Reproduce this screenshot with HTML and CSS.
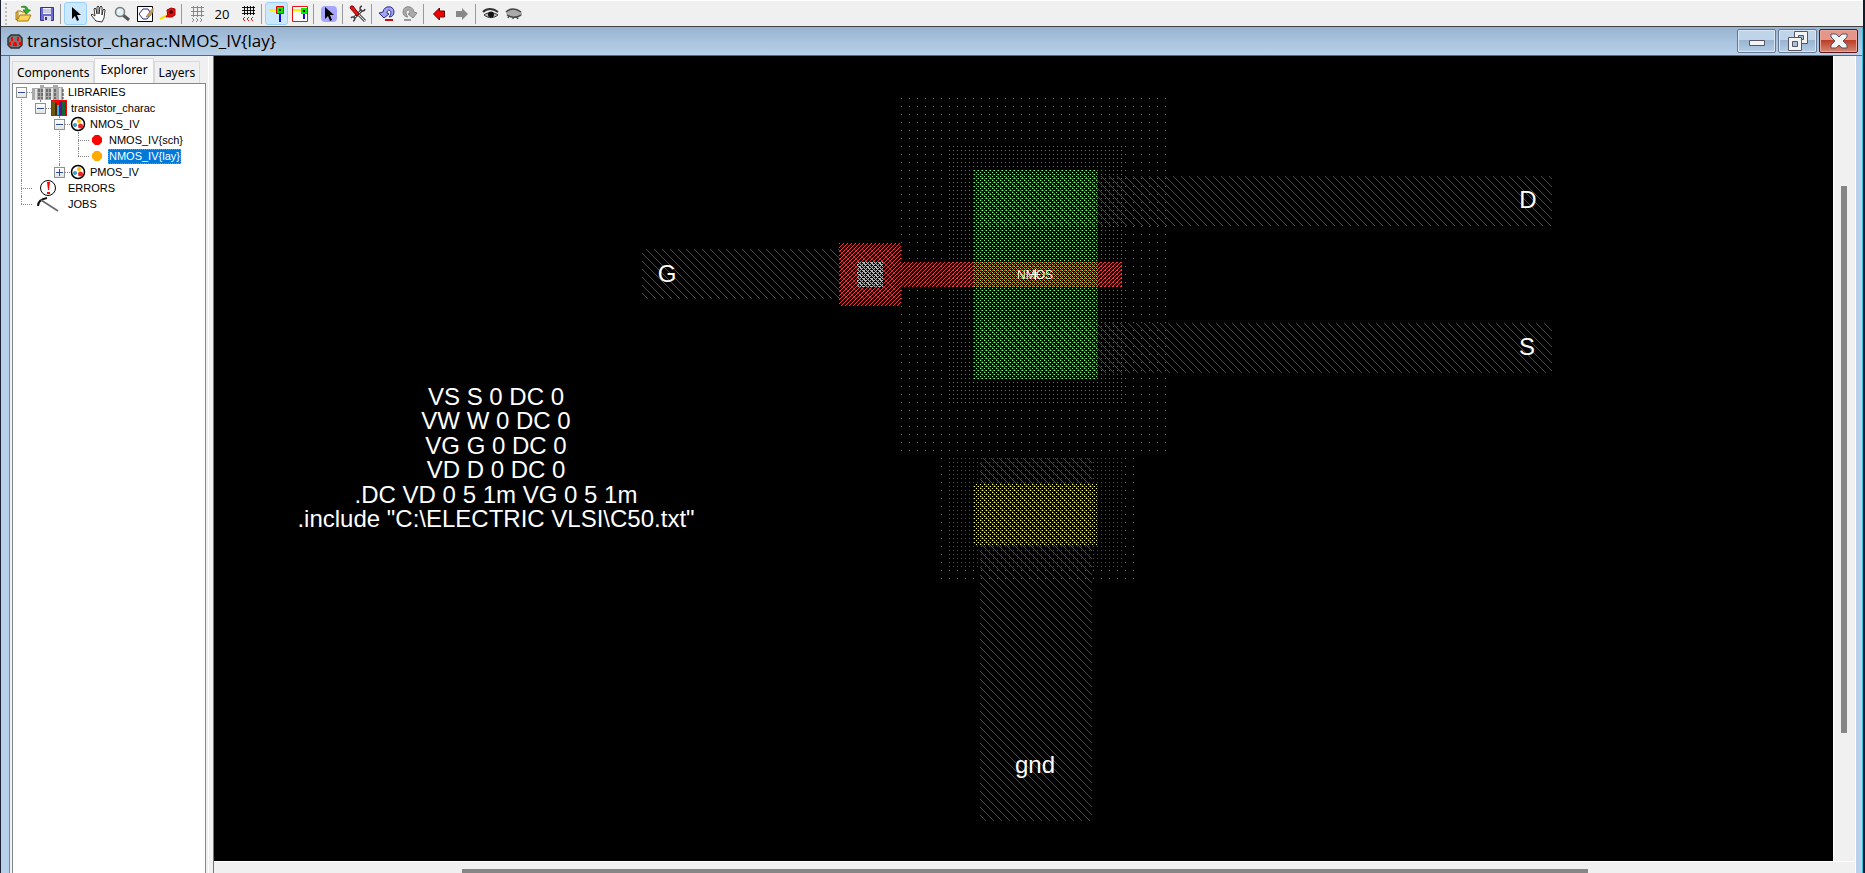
FILE: index.html
```html
<!DOCTYPE html>
<html lang="en">
<head>
<meta charset="utf-8">
<title>transistor_charac:NMOS_IV{lay}</title>
<link rel="stylesheet" href="styles.css">
</head>
<body>
<div class="app">
  <header class="toolbar">
    <span class="grip"></span>
    <button class="tool" aria-label="Open library"><svg width="18" height="18" viewBox="0 0 18 18"><path d="M2 6h4l1 1h4v3" fill="#ffe680" stroke="#a87a10"/><path d="M1 15V7h2v6z" fill="#f5c842" stroke="#a87a10"/><path d="M2 16l3-6h11l-3 6z" fill="#fbd65a" stroke="#a87a10"/><path d="M6 2c4-2 7 0 7 3h2.500l-4 4-3.500-4H11c0-2-2-3-5-3z" fill="#35b135" stroke="#126b18" stroke-width=".7"/></svg></button>
    <button class="tool" aria-label="Save library"><svg width="18" height="18" viewBox="0 0 18 18"><path d="M2.500 2.500h13v13h-13z" fill="#6a6ad0" stroke="#33338f"/><path d="M5 3h8v6H5z" fill="#eef"/><path d="M5 5h8M5 7h8" stroke="#aab"/><path d="M6 11h7v5H6z" fill="#dde"/><path d="M7 12h2v3H7z" fill="#33338f"/></svg></button>
    <span class="sep"></span>
    <button class="tool on" aria-label="Click, zoom, wire"><svg width="18" height="18" viewBox="0 0 18 18"><path d="M5 2v12l3-3 2 5 2-1-2-5h4z"/></svg></button>
    <button class="tool" aria-label="Pan"><svg width="18" height="18" viewBox="0 0 18 18"><path d="M6 16l-5-6 1-1 3 2-1-7 1-1 1 1 1 5V2l1-1 1 1v7l1-7 1-1 1 1v8l1-5 1-1 1 1-1 8-2 4z" fill="#fff" stroke="#222" stroke-width=".9"/></svg></button>
    <button class="tool" aria-label="Zoom"><svg width="18" height="18" viewBox="0 0 18 18"><path d="M10 10l6 5" stroke="#555" stroke-width="3"/><circle cx="7" cy="7" r="4.500" fill="#dff0f5" stroke="#777" stroke-width="1.500"/><path d="M5 7l2-2" stroke="#fff"/></svg></button>
    <button class="tool" aria-label="Outline"><svg width="18" height="18" viewBox="0 0 18 18"><path d="M1.500 1.500h15v15h-15z" fill="#fff" stroke="#000"/><path d="M3 9l4-5h5l3 5-4 5H7z" fill="none" stroke="#23238e"/><path d="M17 3l-5 6-2 3 4-1 3-4z" fill="#c99b50" stroke="#876" stroke-width=".7"/></svg></button>
    <button class="tool" aria-label="Measure"><svg width="18" height="18" viewBox="0 0 18 18"><path d="M1 14l8-4" stroke="#f5e000" stroke-width="2"/><path d="M8 5l4-2 4 1v6l-3 2H9z" fill="#e01010" stroke="#a00"/><circle cx="12" cy="7" r="2" fill="#500"/><path d="M7 12l3-2" stroke="#d00" stroke-width="2"/></svg></button>
    <span class="sep"></span>
    <button class="tool" aria-label="Toggle grid"><svg width="18" height="18" viewBox="0 0 18 18"><path d="M5.500 1v11M9.500 1v11M13.500 1v11M3 2.500h13M3 6.500h13M3 10.500h13" stroke="#888"/><path d="M4 13l2 2-2 2M8 13l2 2-2 2M12 13l2 2-2 2" fill="none" stroke="#888"/></svg></button>
    <button class="tool num" aria-label="Grid spacing">20</button>
    <button class="tool" aria-label="Grid finer"><svg width="18" height="18" viewBox="0 0 18 18"><path d="M3 2.500h13M3 5.500h13M3 8.500h13M5.500 1v9M8.500 1v9M11.500 1v9M14.500 1v9" stroke="#111"/><path d="M6 12l-2 2 2 2M10 12l-2 2 2 2M14 12l-2 2 2 2" fill="none" stroke="#e01010"/></svg></button>
    <span class="sep"></span>
    <button class="tool on" aria-label="Select objects"><svg width="18" height="18" viewBox="0 0 18 18"><path d="M1 5h7" stroke="#f4f400" stroke-width="2"/><path d="M12 9v8" stroke="#1010e0" stroke-width="2"/><path d="M8.500 1.500h7v7h-7z" fill="#00f000" stroke="#e00000"/><path d="M11 4h2v2h-2z"/></svg></button>
    <button class="tool" aria-label="Select area"><svg width="18" height="18" viewBox="0 0 18 18"><path d="M1.500 1.500h15v15h-15z" fill="#fff" stroke="#f01010"/><path d="M2 5h8" stroke="#f4f400" stroke-width="2"/><path d="M13 8v6" stroke="#1010e0" stroke-width="2"/><path d="M10 3h6v6h-6z" fill="#00f000"/><path d="M12 5h2v2h-2z"/></svg></button>
    <span class="sep"></span>
    <button class="tool" aria-label="Toggle special select"><svg width="18" height="18" viewBox="0 0 18 18"><rect x="1" y="1" width="16" height="16" rx="4" fill="#a6a6ff"/><path d="M5 2v12l3-3 2 5 2-1-2-5h4z"/></svg></button>
    <span class="sep"></span>
    <button class="tool" aria-label="Preferences"><svg width="18" height="18" viewBox="0 0 18 18"><path d="M5 13l8-8" stroke="#444" stroke-width="3"/><path d="M5 13l8-8" stroke="#eee"/><path d="M2 13a2 2 0 1 1 2 3M13 1a2.500 2.500 0 1 0 3 3" stroke="#444" stroke-width="1.500" fill="none"/><path d="M10 10l6 6" stroke="#555" stroke-width="3"/><path d="M10 10l6 6" stroke="#ddd"/><path d="M2 1h2l6 8-2 2L1 3z" fill="#e01818" stroke="#800"/></svg></button>
    <span class="sep"></span>
    <button class="tool" aria-label="Undo"><svg width="18" height="18" viewBox="0 0 18 18"><path d="M5 7c1-7 11-7 11 0 0 3-2 5-5 5 2-2 3-6 0-7-1 0-2 1-2 3l2 1-5 4-5-5z" fill="#a4a4f4" stroke="#2b2b90"/><path d="M7 14h8v2H7z" fill="#c01010"/></svg></button>
    <button class="tool" aria-label="Redo"><svg width="18" height="18" viewBox="0 0 18 18"><path d="M13 7C12 0 2 0 2 7c0 3 2 5 5 5-2-2-3-6 0-7 1 0 2 1 2 3l-2 1 5 4 4-5z" fill="#aaa" stroke="#888"/><path d="M3 14h7v2H3z" fill="#999"/></svg></button>
    <span class="sep"></span>
    <button class="tool" aria-label="Back"><svg width="18" height="18" viewBox="0 0 18 18"><path d="M3.500 9l6-6v3h5v6h-5v3z" fill="#f00000" stroke="#600"/></svg></button>
    <button class="tool" aria-label="Forward"><svg width="18" height="18" viewBox="0 0 18 18"><path d="M15 9L9 3v3H3v6h6v3z" fill="#888"/></svg></button>
    <span class="sep"></span>
    <button class="tool" aria-label="Expand cells"><svg width="18" height="18" viewBox="0 0 18 18"><path d="M1 7c4-4 10-4 15 0" fill="none" stroke="#333" stroke-width="2"/><path d="M2 10c3-3 10-3 14 0-4 3-9 4-14 0z" fill="#bbb" stroke="#333"/><circle cx="9" cy="9.500" r="3" fill="#111"/></svg></button>
    <button class="tool" aria-label="Unexpand cells"><svg width="18" height="18" viewBox="0 0 18 18"><path d="M1 8c4-5 11-5 16 0v2c-3 4-12 4-15 0z" fill="#aaa"/><path d="M1 7c4-4 10-4 15 0M2 10c4 3 10 3 14 0M4 11l-1 2M8 12v2M12 12l1 2" fill="none" stroke="#444" stroke-width="1.500"/></svg></button>
  </header>

  <section class="window">
    <div class="titlebar">
      <svg class="logo" width="16" height="15" viewBox="0 0 16 15"><path d="M4 1h8l3 3v7l-3 3H4l-3-3V4z" fill="#777" stroke="#333" stroke-width="1.500"/><path d="M4 3h2v4H4zM10 3h2v4h-2zM6 10l1-2h2l1 2v2H6zM2 8h2v3H2zM12 8h2v3h-2z" fill="#f00"/></svg>
      <h1 class="title">transistor_charac:NMOS_IV{lay}</h1>
      <div class="controls">
        <button class="ctl" aria-label="Minimize"><svg width="20" height="20" viewBox="0 0 20 20"><path d="M2.500 9.500h15v5h-15z" fill="#f4f4f4" stroke="#555568"/></svg></button>
        <button class="ctl" aria-label="Restore"><svg width="22" height="20" viewBox="0 0 22 20"><path d="M7.500.5h13v12h-13z" fill="#f4f4f4" stroke="#555568"/><path d="M11.500 4.500h5v4h-5z" fill="#a9c0da" stroke="#555568"/><path d="M1.500 6.500h13v13h-13z" fill="#f4f4f4" stroke="#555568"/><path d="M5.500 10.500h5v5h-5z" fill="#a9c0da" stroke="#555568"/></svg></button>
        <button class="ctl close" aria-label="Close"><svg width="20" height="18" viewBox="0 0 20 18"><path d="M2 2h5l3 3 3-3h5v3l-4 4 4 4v3h-5l-3-3-3 3H2v-3l4-4-4-4z" fill="#f4f4f4" stroke="#555568"/></svg></button>
      </div>
    </div>

    <div class="content">
      <aside class="side">
        <div class="tabs" role="tablist">
          <button class="tab" role="tab">Components</button>
          <button class="tab active" role="tab" aria-selected="true">Explorer</button>
          <button class="tab" role="tab">Layers</button>
        </div>
        <div class="tree">
          <ul class="branch root">
            <li class="open"><div class="row"><button class="box" aria-label="Collapse"></button><span class="link"></span><svg width="32" height="16" viewBox="0 0 32 16"><path d="M0 4h8V1h4v2h9V1h5v2h5v13H0z" fill="#aaa"/><path d="M4 5v11M12 4v12M20 4v12M28 4v12" stroke="#e4e4e4" stroke-width="2"/><path d="M7 5v10M10 5v10M15 5v10M18 5v10M23 5v10M31 5v10" stroke="#333" stroke-dasharray="3 1"/></svg><span class="label">LIBRARIES</span></div>
              <ul class="branch">
                <li class="open"><div class="row"><button class="box" aria-label="Collapse"></button><span class="link"></span><svg width="16" height="16" viewBox="0 0 16 16"><path d="M0 0h16v16H0z" fill="#f00"/><path d="M1 1h3v14H1z" fill="#6b5a10"/><path d="M4 3h2v12H4z" fill="#552200"/><path d="M6 5h2v10H6z" fill="#29b6e6"/><path d="M8 1h3v14H8z" fill="#60108a"/><path d="M11 1h3v14h-3z" fill="#163"/><path d="M14 1h1v14h-1z" fill="#22f"/></svg><span class="label">transistor_charac</span></div>
                  <ul class="branch">
                    <li class="open"><div class="row"><button class="box" aria-label="Collapse"></button><span class="link"></span><svg width="16" height="16" viewBox="0 0 16 16"><circle cx="8" cy="8" r="6.500" fill="#fff" stroke="#000" stroke-width="1.500"/><circle cx="9" cy="5" r="2" fill="#fb0"/><circle cx="5" cy="9" r="2" fill="#39c"/><circle cx="10.500" cy="10" r="2.500" fill="#e22"/></svg><span class="label">NMOS_IV</span></div>
                      <ul class="branch">
                        <li><div class="row"><span class="link leaf"></span><svg width="16" height="16" viewBox="0 0 16 16"><path d="M6 3h4l3 3v4l-3 3H6l-3-3V6z" fill="#f00"/></svg><span class="label">NMOS_IV{sch}</span></div></li>
                        <li><div class="row"><span class="link leaf"></span><svg width="16" height="16" viewBox="0 0 16 16"><path d="M6 3h4l3 3v4l-3 3H6l-3-3V6z" fill="#fa0"/></svg><span class="label selected">NMOS_IV{lay}</span></div></li>
                      </ul>
                    </li>
                    <li><div class="row"><button class="box plus" aria-label="Expand"></button><span class="link"></span><svg width="16" height="16" viewBox="0 0 16 16"><circle cx="8" cy="8" r="6.500" fill="#fff" stroke="#000" stroke-width="1.500"/><circle cx="9" cy="5" r="2" fill="#fb0"/><circle cx="5" cy="9" r="2" fill="#39c"/><circle cx="10.500" cy="10" r="2.500" fill="#e22"/></svg><span class="label">PMOS_IV</span></div></li>
                  </ul>
                </li>
              </ul>
            </li>
            <li><div class="row"><span class="link leaf"></span><svg width="32" height="16" viewBox="0 0 32 16"><circle cx="16" cy="8" r="7.500" fill="#fff" stroke="#000"/><path d="M15 2h3l-1 8h-1zM15 12h3v2h-3z" fill="#f00"/></svg><span class="label">ERRORS</span></div></li>
            <li><div class="row"><span class="link leaf"></span><svg width="32" height="16" viewBox="0 0 32 16"><path d="M6 10c0-4 3-7 9-8" fill="none" stroke="#111" stroke-width="2"/><path d="M9 4l17 11" stroke="#666" stroke-width="1.500"/></svg><span class="label">JOBS</span></div></li>
          </ul>
        </div>
      </aside>

      <main class="editor">
        <svg class="layout" role="img" aria-label="NMOS layout">
          <defs>
            <pattern id="metal" width="8" height="8" patternUnits="userSpaceOnUse" shape-rendering="crispEdges"><path d="M5 0h1v1h-1zM6 1h1v1h-1zM7 2h1v1h-1zM0 3h1v1h-1zM1 4h1v1h-1zM2 5h1v1h-1zM3 6h1v1h-1zM4 7h1v1h-1z" fill="#3333ff"/></pattern>
            <pattern id="poly" width="4" height="4" patternUnits="userSpaceOnUse" shape-rendering="crispEdges"><path d="M2 0h1v1h-1zM1 1h1v1h-1zM0 2h1v1h-1zM3 3h1v1h-1z" fill="#ff3333"/></pattern>
            <pattern id="select" width="8" height="8" patternUnits="userSpaceOnUse" shape-rendering="crispEdges"><path d="M5 2h1v1h-1z" fill="#96643c"/></pattern>
            <pattern id="implant" width="4" height="4" patternUnits="userSpaceOnUse" shape-rendering="crispEdges"><path d="M1 2h1v1h-1z" fill="#96643c"/></pattern>
            <pattern id="well" width="4" height="4" patternUnits="userSpaceOnUse" shape-rendering="crispEdges"><path d="M1 2h1v1h-1z" fill="#007840"/></pattern>
            <pattern id="active" width="4" height="4" patternUnits="userSpaceOnUse" shape-rendering="crispEdges"><path d="M2 2h1v1h-1zM0 0h1v1h-1z" fill="#6bff6b"/></pattern>
            <pattern id="tap" width="4" height="4" patternUnits="userSpaceOnUse" shape-rendering="crispEdges"><path d="M2 2h1v1h-1zM0 0h1v1h-1z" fill="#ffff66"/></pattern>
            <pattern id="cut" width="4" height="4" patternUnits="userSpaceOnUse" shape-rendering="crispEdges"><path d="M0 0h3v1h-3zM1 1h1v1h-1zM0 2h1v1h-1zM2 2h2v1h-2zM3 3h1v1h-1zM0 3h1v1h-1z" fill="#b4b4b4"/></pattern>
          </defs>
          <g transform="translate(-214 -56)">
            <rect x="901" y="98" width="265" height="353" fill="url(#select)"/>
            <rect x="941" y="458" width="193" height="121" fill="url(#select)"/>
            <rect x="949" y="146" width="173" height="257" fill="url(#implant)"/>
            <rect x="949" y="458" width="173" height="109" fill="url(#well)"/>
            <rect x="974" y="170" width="124" height="209" fill="url(#active)"/>
            <rect x="974" y="484" width="124" height="61" fill="url(#tap)"/>
            <rect x="839" y="243" width="62" height="63" fill="url(#poly)"/>
            <rect x="901" y="262" width="221" height="25" fill="url(#poly)"/>
            <rect x="857" y="262" width="26" height="25" fill="url(#cut)"/>
            <rect x="642" y="249" width="253" height="50" fill="url(#metal)"/>
            <rect x="980" y="176" width="572" height="50" fill="url(#metal)"/>
            <rect x="980" y="323" width="572" height="50" fill="url(#metal)"/>
            <rect x="980" y="458" width="112" height="363" fill="url(#metal)"/>
            <path d="M1030 274.500h10M1035.500 269v11" stroke="#fff"/>
            <g class="names">
              <text x="667" y="282">G</text>
              <text x="1528" y="208">D</text>
              <text x="1527" y="355">S</text>
              <text x="1035" y="773">gnd</text>
              <text class="small" x="1035" y="279">NMOS</text>
              <text x="496" y="405">VS S 0 DC 0</text>
              <text x="496" y="429">VW W 0 DC 0</text>
              <text x="496" y="454">VG G 0 DC 0</text>
              <text x="496" y="478">VD D 0 DC 0</text>
              <text x="496" y="503">.DC VD 0 5 1m VG 0 5 1m</text>
              <text x="496" y="527">.include "C:\ELECTRIC VLSI\C50.txt"</text>
            </g>
          </g>
        </svg>
        <div class="vbar"><span class="vthumb"></span></div>
        <div class="hbar"><span class="hthumb"></span></div>
      </main>
    </div>
  </section>
</div>
</body>
</html>
```

FILE: styles.css
```css
* { box-sizing: border-box; }
body { margin: 0; background: #f0f0f0; font-family: "Liberation Sans", Arial, sans-serif; color: #000; }
button { padding: 0; border: 0; background: none; font: inherit; color: inherit; }
svg { display: block; }
.app { display: flex; flex-direction: column; height: 100vh; overflow: hidden; border-left: 1px solid #1c2233; border-right: 2px solid #101c2c; }

.toolbar { display: flex; align-items: center; flex: none; height: 27px; padding-left: 4px; background: #f0f0f0; border-top: 1px solid #fff; border-bottom: 1px solid #444; }
.grip { width: 2px; height: 22px; margin-right: 5px; background: repeating-linear-gradient(#bbb 0 2px, transparent 2px 4px); }
.tool { display: flex; align-items: center; justify-content: center; flex: none; width: 23px; height: 23px; border-radius: 3px; }
.tool.on { background: #cce8ff; border: 1px solid #99d1ff; }
.tool.num { width: 28px; font: 13px "Open Sans", sans-serif; }
.sep { flex: none; width: 1px; height: 20px; margin: 0 3px 0 2px; background: #999; }

.window { display: flex; flex-direction: column; flex: 1; min-height: 0; background: #b9d1ea; border-right: 1px solid #35c0e0; }
.titlebar { display: flex; align-items: center; flex: none; height: 29px; padding: 0 4px 0 6px; background: linear-gradient(#98b3d1, #b9d1ea); border-bottom: 1px solid #666; }
.title { flex: 1; margin: 0 0 0 4px; font: 17px/28px "Open Sans", "Segoe UI", sans-serif; }
.controls { display: flex; gap: 2px; }
.ctl { display: flex; align-items: center; justify-content: center; width: 39px; height: 24px; border: 1px solid #66788f; border-radius: 2px; box-shadow: inset 0 0 0 1px #d8e6f4; background: linear-gradient(#bfd3e9 45%, #98b3d1 45%, #b5cde6); }
.ctl.close { border-color: #5a1420; box-shadow: inset 0 0 0 1px #e8a89c; background: linear-gradient(#e5968a 45%, #bb3a22 45%, #d48872); }

.content { display: flex; flex: 1; min-height: 0; margin: 0 6px 0 8px; border-left: 1px solid #888; }
.side { display: flex; flex-direction: column; flex: none; width: 204px; padding: 2px 7px 0 2px; background: #f0f0f0; border-right: 1px solid #777; box-shadow: inset -4px 0 #f0f0f0, inset -5px 0 #fff; }
.tabs { display: flex; align-items: flex-end; flex: none; height: 25px; font: 12px "Noto Sans", Tahoma, sans-serif; }
.tab { height: 22px; padding: 0 4px; border: 1px solid #d9d9d9; border-bottom: 0; }
.tab.active { height: 25px; padding: 0 5px 4px; background: #fafafa; }
.tree { flex: 1; padding-left: 3px; background: #fff; border: 1px solid #828790; border-bottom: 0; font-size: 11px; }
.branch { margin: 0; padding: 0 0 0 19px; list-style: none; }
.branch.root { padding-left: 0; }
.branch li { position: relative; }
.branch li::before { content: ""; position: absolute; left: 5px; top: 0; bottom: 0; border-left: 1px dotted #888; }
.branch li:last-child::before { bottom: auto; height: 8px; }
.branch.root > li:first-child::before { top: 8px; }
.row { display: flex; align-items: center; height: 16px; }
.box { position: relative; flex: none; width: 11px; height: 11px; background: linear-gradient(#fff, #e4e4e4); border: 1px solid #919191; }
.box::before { content: ""; position: absolute; left: 1px; right: 1px; top: 4px; border-top: 1px solid #2b4d99; }
.box.plus::after { content: ""; position: absolute; top: 1px; bottom: 1px; left: 4px; border-left: 1px solid #2b4d99; }
.link { flex: none; width: 5px; border-top: 1px dotted #888; }
.link.leaf { width: 11px; margin-left: 5px; }
.label { margin-left: 3px; padding: 0 1px; line-height: 15px; white-space: nowrap; }
.selected { color: #fff; background: #0078d7; outline: 1px dotted #e08020; outline-offset: -1px; }

.editor { display: grid; flex: 1; grid-template: minmax(0, 1fr) 12px / minmax(0, 1fr) 22px; min-width: 0; background: #f0f0f0; border-right: 1px solid #fff; }
.layout { width: 100%; height: 100%; background: #000; }
.names { fill: #fff; font-size: 24px; text-anchor: middle; }
.names .small { font-size: 12px; }
.vbar { padding-top: 130px; border-left: 1px solid #fff; }
.vthumb { display: block; width: 6px; height: 81%; margin-left: 7px; background: #868686; }
.hbar { grid-column: 1 / -1; border-top: 1px solid #fff; padding-top: 7px; }
.hthumb { display: block; width: 68.6%; height: 4px; margin-left: 15.1%; background: #868686; }
```
